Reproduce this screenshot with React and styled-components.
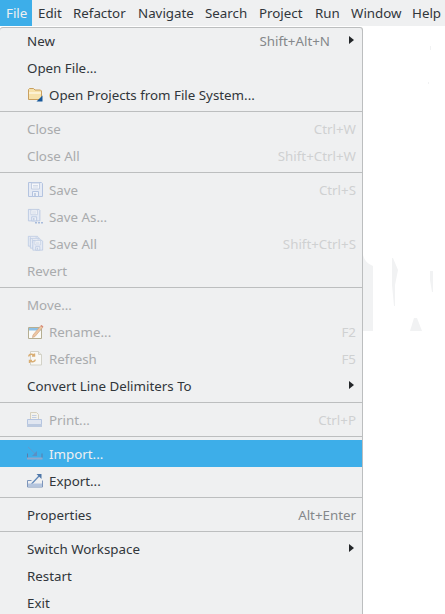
import React from 'react';
import styled, { createGlobalStyle } from 'styled-components';

const Global = createGlobalStyle`
  html, body { margin: 0; padding: 0; background: #fff; overflow: hidden; }
  body { font-family: "Noto Sans", sans-serif; font-size: 13.33px; color: #31363b; }
`;
const Page = styled.div`
  width: 445px; height: 614px; overflow: hidden; display: flex; flex-direction: column; position: relative;
`;
const MenuBar = styled.div`
  display: flex; height: 26px; background: #eff0f1; flex: none; margin-bottom: 1px;
`;
const TopItem = styled.div`
  width: ${p => p.$w}px; box-sizing: border-box; padding-left: 6px; display: flex; align-items: center; white-space: nowrap;
  background: ${p => p.$active ? '#3daee9' : 'transparent'};
  color: ${p => p.$active ? '#eff0f1' : '#31363b'};
`;
const Menu = styled.div`
  width: 363px; box-sizing: border-box; background: #eff0f1; border-right: 1px solid #bcbebf;
  box-shadow: inset 0 1px 0 #bcbebf; border-top-right-radius: 3px; border-top-left-radius: 3px; flex: none;
`;
const Row = styled.div`
  height: 27px; display: flex; align-items: center; padding: 0 6px 0 27px; position: relative;
  background: ${p => p.$active ? '#3daee9' : 'transparent'};
  color: ${p => p.$active ? '#eff0f1' : p.$disabled ? '#a9abad' : '#31363b'};
`;
const Label = styled.span`
  flex: 1; white-space: nowrap; padding-left: ${p => p.$icon ? 22 : 0}px;
`;
const Shortcut = styled.span`
  white-space: nowrap; color: ${p => p.$disabled ? '#cfd1d2' : '#85888b'};
`;
const ArrowShortcut = styled(Shortcut)`
  margin-right: 26px;
`;
const Slot = styled.span`
  position: absolute; left: 28px; top: 6px; width: 16px; height: 16px; display: block;
  & svg { display: block; overflow: visible; }
`;
const Arrow = styled.span`
  position: absolute; right: 8px; top: 9px; width: 0; height: 0;
  border-left: 5px solid #232629; border-top: 4.5px solid transparent; border-bottom: 4.5px solid transparent;
`;
const Sep = styled.div`
  height: 7px; box-sizing: border-box; padding-top: 3px;
  &::before { content: ''; display: block; height: 1px; background: #bcbebf; }
`;
const Smudges = styled.svg`
  position: absolute; left: 0; top: 0; pointer-events: none;
`;

const S = p => <svg width="16" height="16" viewBox="0 0 16 16" {...p} />;
const FolderIcon = () => (
  <S>
    <path d="M.5 2.500l1-1h4l1.500 1.500h5.500l1 1v8.500H.5z" fill="#f7e2ab" stroke="#c9a05f" />
    <path d="M1 5h12v2H1z" fill="#fcf1d2" />
    <path d="M14.500 8.500v6h-6z" fill="#17589b" />
  </S>
);
const Disk = () => (
  <g>
    <path d="M.5.5h13l1 1v13H.5z" fill="#e6ebf5" stroke="#b4c4e0" />
    <path d="M3.500 1h8v6h-8z" fill="#f6f7fa" stroke="#c3cee2" />
    <path d="M5 3.500h5M5 5h5" stroke="#d3dbe9" />
    <path d="M4.500 9.500h6v5h-6z" fill="#eef1f7" stroke="#b4c4e0" />
    <path d="M6 11h2v3H6z" fill="#c2cfe4" />
  </g>
);
const SaveIcon = () => <S><Disk /></S>;
const SaveAsIcon = () => (
  <S>
    <g transform="scale(.82)"><Disk /></g>
    <path d="M7 13h2v1.500H7zM10 13h2v1.500h-2zM13 13h2v1.500h-2z" fill="#a9bcdc" />
  </S>
);
const SaveAllIcon = () => (
  <S>
    <g transform="scale(.7)"><Disk /></g>
    <g transform="translate(2 2) scale(.7)"><Disk /></g>
    <g transform="translate(4.500 4) scale(.7)"><Disk /></g>
  </S>
);
const RenameIcon = () => (
  <S>
    <path d="M.5 3.500h13v11H.5z" fill="#fbfbf8" stroke="#b5ae92" />
    <path d="M1 4h12v2.500H1z" fill="#8cc0e6" />
    <path d="M5 11l8-9.500 2 1.500-8 9.500-2.500 1z" fill="#edc6a3" stroke="#d2a682" strokeWidth=".7" />
    <path d="M13 1.500l2 1.500" stroke="#d98c7c" strokeWidth="1.500" />
  </S>
);
const RefreshIcon = () => (
  <S>
    <path d="M2.500.5h8l3 3v10.500h-11z" fill="#f8f8f5" stroke="#d3d2c8" />
    <path d="M10.500.5v3h3" fill="#ecebe2" stroke="#d3d2c8" />
    <path d="M.8 5.500c0-2.600 4.500-3 5.500-1M6.500 2.500v2.500H4" fill="none" stroke="#d9ae74" strokeWidth="1.400" />
    <path d="M7.200 8.500c0 2.600-4.500 3-5.500 1M1.500 12V9.500H4" fill="none" stroke="#d9ae74" strokeWidth="1.400" />
  </S>
);
const PrintIcon = () => (
  <S>
    <path d="M2.500.5h6l2 2v5h-8z" fill="#f3f2ec" stroke="#d6d0bd" />
    <path d="M4 3.500h4.500M4 5.500h4.500" stroke="#c3cee2" />
    <path d="M-.5 7.500h14v6h-14z" fill="#e0e6f1" stroke="#b4c4e0" />
    <path d="M-1 12h15v3H-1z" fill="#bccae0" />
  </S>
);
const ImportIcon = () => (
  <S>
    <path d="M0 1l7.500 7" stroke="#5f9ccf" strokeWidth="1" />
    <path d="M9 5v5H4z" fill="#5a90c4" />
    <path d="M-.5 7.500v4.500M14 7.500v4.500" fill="none" stroke="#5a7cab" />
    <path d="M-1 11.500h15.500v2H-1z" fill="#8ea8cc" />
  </S>
);
const ExportIcon = () => (
  <S>
    <path d="M3.500 11l8-8.500" stroke="#5d86b8" strokeWidth="1.200" />
    <path d="M8.500 1h5v5z" fill="#4f77a8" />
    <path d="M-.5 7.500v6.500h15V7.500M-.5 7.500h4" fill="none" stroke="#7d95bb" />
    <path d="M0 10.500h14v3H0z" fill="#b4c5de" />
  </S>
);

const top = [['Edit', 35], ['Refactor', 65], ['Navigate', 67], ['Search', 54], ['Project', 56], ['Run', 36], ['Window', 61], ['Help', 39]];

const items = [
  { l: 'New', s: 'Shift+Alt+N', arrow: 1 }, { l: 'Open File...' }, { l: 'Open Projects from File System...', I: FolderIcon }, 0,
  { l: 'Close', s: 'Ctrl+W', d: 1 }, { l: 'Close All', s: 'Shift+Ctrl+W', d: 1 }, 0,
  { l: 'Save', s: 'Ctrl+S', d: 1, I: SaveIcon }, { l: 'Save As...', d: 1, I: SaveAsIcon }, { l: 'Save All', s: 'Shift+Ctrl+S', d: 1, I: SaveAllIcon }, { l: 'Revert', d: 1 }, 0,
  { l: 'Move...', d: 1 }, { l: 'Rename...', s: 'F2', d: 1, I: RenameIcon }, { l: 'Refresh', s: 'F5', d: 1, I: RefreshIcon }, { l: 'Convert Line Delimiters To', arrow: 1 }, 0,
  { l: 'Print...', s: 'Ctrl+P', d: 1, I: PrintIcon }, 0,
  { l: 'Import...', a: 1, I: ImportIcon }, { l: 'Export...', I: ExportIcon }, 0,
  { l: 'Properties', s: 'Alt+Enter' }, 0,
  { l: 'Switch Workspace', arrow: 1 }, { l: 'Restart' }, { l: 'Exit' },
];

export default function App() {
  return (
    <Page>
      <Global />
      <MenuBar>
        <TopItem $active $w={32}>File</TopItem>
        {top.map(([t, w]) => <TopItem key={t} $w={w}>{t}</TopItem>)}
      </MenuBar>
      <Menu>
        {items.map((it, i) => {
          if (it === 0) return <Sep key={i} />;
          const Sc = it.arrow ? ArrowShortcut : Shortcut;
          return (
            <Row key={i} $disabled={it.d} $active={it.a}>
              {it.I && <Slot><it.I /></Slot>}
              <Label $icon={!!it.I}>{it.l}</Label>
              {it.s && <Sc $disabled={it.d}>{it.s}</Sc>}
              {it.arrow && <Arrow />}
            </Row>
          );
        })}
      </Menu>
      <Smudges width="445" height="614" viewBox="0 0 445 614" fill="#f1f2f3">
        <path d="M363 255q2 8 10 11v65h-10z" />
        <path d="M392 258h1l5 12-3 15v21h-1l-2-21z" />
        <path d="M430 271h3v21h-1l-2-12z" />
        <path d="M414 318h3l5 13h-12z" />
        <path d="M430 46h1v4h-1zM428 82h1v2h-1z" />
      </Smudges>
    </Page>
  );
}
